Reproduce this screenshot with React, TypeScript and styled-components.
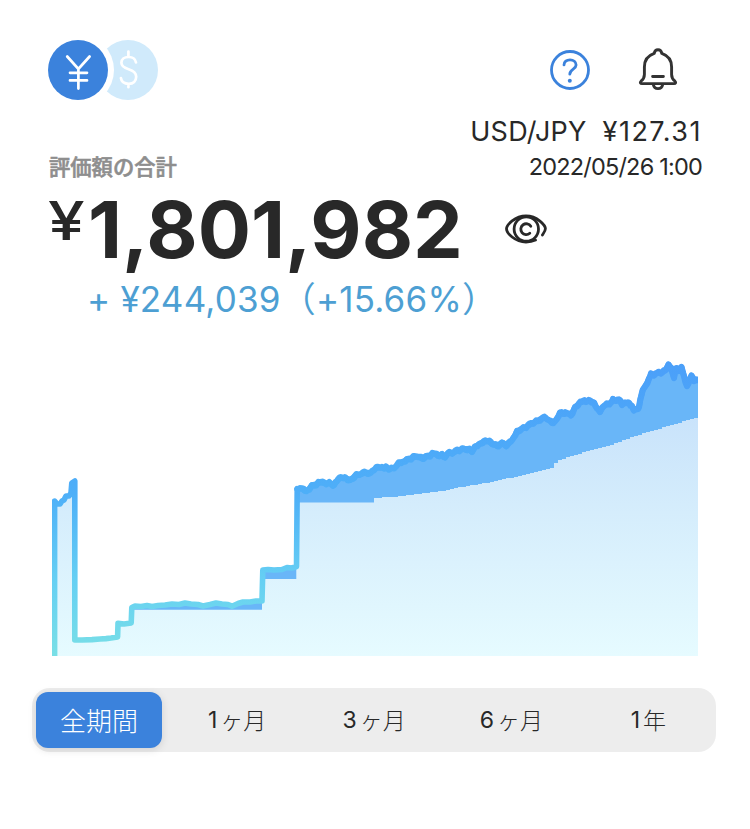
import { useState } from 'react';
import styled, { createGlobalStyle } from 'styled-components';

const colors = {
  primary: '#3b82dc',
  primaryLight: '#d0eafb',
  text: '#282828',
  muted: '#8e8e8e',
  gain: '#4d9fd3',
  tabs: '#ededed',
};

const GlobalStyle = createGlobalStyle`
  * {
    box-sizing: border-box;
  }

  body {
    margin: 0;
    background-color: #fff;
    color: ${colors.text};
    font-family: Inter, 'Noto Sans CJK JP', sans-serif;
  }
`;

const Container = styled.div`
  width: 750px;
  height: 829px;
  padding: 40px 34px 0 32px;
  overflow: hidden;
`;

const Header = styled.header`
  height: 60px;
  padding: 0 37px 0 16px;
  display: flex;
  align-items: center;
  justify-content: space-between;
`;

const Actions = styled.div`
  display: flex;
  align-items: center;
  gap: 48px;
`;

const IconButton = styled.button`
  padding: 0;
  border: none;
  background-color: transparent;
  display: flex;
  cursor: pointer;
`;

const Rate = styled.div`
  height: 36px;
  margin-top: 14px;
  padding-right: 14px;
  display: flex;
  justify-content: flex-end;
  gap: 16px;
  font-size: 27px;
  line-height: 36px;
  letter-spacing: 0.2px;
`;

const Price = styled.span`
  letter-spacing: 1.5px;
`;

const LabelRow = styled.div`
  height: 36px;
  padding: 0 14px 0 17px;
  display: flex;
  justify-content: space-between;
  line-height: 34px;
`;

const Label = styled.div`
  color: ${colors.muted};
  font-size: 21.3px;
  font-weight: 500;
  -webkit-text-stroke: 0.6px ${colors.muted};
`;

const Updated = styled.div`
  font-size: 23.5px;
  letter-spacing: -0.8px;
`;

const TotalRow = styled.div`
  height: 86px;
  padding-left: 16px;
  display: flex;
  align-items: center;
`;

const Total = styled.div`
  width: 456px;
  display: flex;
  align-items: flex-start;
`;

const Currency = styled.span`
  width: 40px;
  padding-top: 1px;
  font-size: 54px;
  font-weight: 500;
  line-height: 66px;
  transform: scaleX(1.22);
  transform-origin: left;
`;

const Amount = styled.span`
  font-size: 79px;
  font-weight: 700;
  line-height: 84px;
`;

const Gain = styled.div`
  height: 56px;
  padding-left: 55px;
  color: ${colors.gain};
  font-size: 35px;
  line-height: 54px;
  letter-spacing: 0.2px;
  white-space: pre;
`;

const ChartArea = styled.div`
  height: 308px;
  margin-top: 28px;
  padding-left: 20px;

  svg {
    display: block;
  }
`;

const Tabs = styled.nav`
  width: 684px;
  height: 64px;
  margin-top: 24px;
  padding: 4px 0 4px 4px;
  border-radius: 18px;
  background-color: ${colors.tabs};
  display: grid;
  grid-template-columns: 131.5px repeat(4, 1fr);
`;

interface TabProps {
  $active: boolean;
}

const Tab = styled.button<TabProps>`
  padding: 0 0 2px;
  border: none;
  border-radius: 12px;
  background-color: ${(props) =>
    props.$active ? colors.primary : 'transparent'};
  box-shadow: ${(props) =>
    props.$active ? '0 2px 8px rgba(0, 0, 0, 0.12)' : 'none'};
  color: ${(props) => (props.$active ? '#fff' : colors.text)};
  font-family: inherit;
  font-size: ${(props) => (props.$active ? '26px' : '23px')};
  font-weight: 300;
  display: flex;
  align-items: center;
  justify-content: center;
  cursor: pointer;

  &:first-child {
    margin-right: 5.5px;
  }
`;

const Count = styled.span`
  margin: 2px 3px 0 2px;
  font-weight: 400;
`;

const Unit = styled.span`
  font-size: 23px;
`;

const CurrencyLogo = () => (
  <svg width="110" height="60" viewBox="48 40 110 60" fill="none">
    <circle cx="128" cy="70" r="30" fill={colors.primaryLight} />
    <circle cx="78" cy="70" r="36" fill="#fff" />
    <circle cx="78" cy="70" r="30" fill={colors.primary} />
    <g stroke="#fff" strokeWidth="2.7" strokeLinecap="round">
      <path d="M67.2 56.5 78.4 69 89.6 56.5M78.4 69V88.6M70 72.8H87M70 80.4H87" />
      <path d="M128.4 51.5V57M128.4 84V87.2M136 62.5C135.4 59 132.6 57 128.6 57C124.2 57 121.4 59.3 121.4 62.8C121.4 66.4 124 67.8 128.6 69.2C133.6 70.7 136.2 72.8 136.2 76.8C136.2 81.2 133.2 83.8 128.8 83.8C124.2 83.8 121.4 81.6 120.9 78" />
    </g>
  </svg>
);

const HelpIcon = () => (
  <svg width="40" height="40" viewBox="550 50 40 40" fill="none">
    <g stroke={colors.primary} strokeWidth="2.8" strokeLinecap="round">
      <circle cx="570" cy="70" r="18.5" />
      <path d="M564 64.9C564 61.8 566.6 59.8 570 59.8C573.5 59.8 576.1 62 576.1 65C576.1 69.2 569.8 69 569.8 74.2" />
    </g>
    <circle cx="569.8" cy="80.7" r="2" fill={colors.primary} />
  </svg>
);

const BellIcon = () => (
  <svg width="41" height="46" viewBox="638 47 41 46" fill="none">
    <g
      stroke="#333"
      strokeWidth="2.9"
      strokeLinecap="round"
      strokeLinejoin="round"
    >
      <path d="M654.2 53.4C654.6 51 655.8 49.7 658 49.7C660.2 49.7 661.4 51 661.8 53.4C668 55.5 671.6 60.3 671.6 67V74.5C671.6 78.5 673 79.6 675 81.2C676.3 82.4 675.6 83.6 674 83.6H642C640.4 83.6 639.7 82.4 641 81.2C643 79.6 644.4 78.5 644.4 74.5V67C644.4 60.3 648 55.5 654.2 53.4Z" />
      <path d="M653.3 84.5C653.8 87.2 655.4 88.6 658 88.6C660.6 88.6 662.2 87.2 662.7 84.5M652.6 76.5H663.4" />
    </g>
  </svg>
);

const EyeIcon = () => (
  <svg width="44" height="32" viewBox="504 213 44 32" fill="none">
    <g stroke={colors.text} strokeWidth="2.8" strokeLinecap="round">
      <path d="M542.4 235C543.4 233.5 545.4 231 545.4 228.8C545.4 225.5 537.4 216 526 216C515 216 506.5 225 506.5 228.8C506.5 233 515 242 526 242C529.6 242 532.6 241.4 535.5 240" />
      <circle cx="526.3" cy="229" r="12.2" />
      <path d="M530.8 226.3A5.4 5.4 0 1 0 529.8 233.2" />
    </g>
  </svg>
);

type Point = [number, number];

const valuation: Point[] = [
  [54.6, 660], [54.6, 501], [57, 504], [60, 504], [62, 501], [64, 500],
  [66, 496], [69, 496], [71, 493], [71.8, 483], [74.8, 481], [74.8, 640],
  [82, 640], [92, 639.6], [100, 639], [106, 638.6], [111, 638], [117.6, 637],
  [118, 623.3], [124, 624], [131.2, 623], [131.8, 607.5], [135, 606],
  [141, 606.5], [147, 605.5], [152, 606.5], [158, 605.5], [165, 605],
  [172, 604], [179, 604.5], [185, 603], [191, 604], [198, 604.5],
  [203, 606], [210, 604.5], [216, 603], [222, 604], [228, 604.5],
  [232, 606.2], [238, 603.5], [243, 602], [250, 602], [256, 601],
  [262, 601], [262.8, 570], [268, 569.5], [274, 570], [282, 569.5],
  [287, 567.5], [292, 568], [296.5, 566.5], [297.2, 489], [301, 488.5],
  [305, 491], [308, 490], [312, 485], [317, 484], [320, 482.5],
  [325, 483.5], [330, 483], [334, 485], [338, 479.5], [342, 478],
  [346, 478], [350, 480], [355, 476], [360, 474.5], [366, 472.5],
  [371, 472.5], [375, 469], [379, 467.5], [383, 468], [386, 466.5],
  [390, 469], [396, 466.5], [400, 462.5], [404, 461.5], [407, 459],
  [412, 458], [417, 456.5], [422, 458.5], [426, 456], [431, 455],
  [434, 453.5], [438, 456], [442, 454], [445, 457.5], [448, 453],
  [453, 453], [458, 450.5], [463, 448.5], [468, 449], [472, 452],
  [476, 446], [480, 443.5], [484, 441], [488, 441], [492, 444],
  [497, 446], [502, 442.5], [507, 445.5], [511, 441.5], [514, 437],
  [517, 431], [522, 428.5], [527, 426.5], [532, 423.5], [537, 421],
  [543, 417.5], [548, 419.5], [552, 423], [556, 420], [560, 412.5],
  [564, 414], [567, 413], [571, 415.5], [575, 407], [579, 403.5],
  [583, 401], [586, 402], [590, 400.5], [594, 402.5], [597, 408.5],
  [600, 412], [604, 406], [608, 404], [611, 402.5], [613, 399],
  [616, 401], [619, 399.5], [622, 405], [625, 402.5], [629, 403],
  [632, 406], [634, 410.5], [639, 407], [641, 397], [643, 389.5],
  [646, 385], [649, 378.5], [651, 373.5], [654, 375.5], [657, 373],
  [661, 373.5], [665, 370.5], [668.5, 364.5], [671, 367.5],
  [674, 378], [675.5, 368.5], [679, 371], [681.5, 367], [684, 376],
  [687, 386], [690, 379], [691.5, 375.5], [694, 381], [700, 379.5],
];

const principal: Point[] = [
  [374, 498], [397, 496.5], [417, 494], [443, 490.5], [460, 487],
  [487, 482.5], [513, 477], [530, 473], [547, 468.5], [552, 467.5],
  [555, 461], [580, 453], [607, 446], [630, 437], [653, 430],
  [673, 424], [698, 417],
];

const toPath = (points: Point[]) =>
  'M' + points.map(([x, y]) => `${x} ${y}`).join('L');

const withSwings = (points: Point[], from: number) => {
  const result: Point[] = [];
  points.forEach(([x, y], i) => {
    result.push([x, y]);
    const next = points[i + 1];
    if (x < from || !next) return;
    for (let px = x + 1.4; px < next[0] - 0.5; px += 1.4) {
      const py = y + ((next[1] - y) * (px - x)) / (next[0] - x);
      result.push([px, py + Math.sin(px * 12.9) * 1.4]);
    }
  });
  return result;
};

const toSteps = (points: Point[], step = 4) => {
  let d = '';
  for (let x = points[0][0]; x < 698; x += step) {
    const i = points.findIndex(([px]) => px > x);
    const [x0, y0] = points[i - 1];
    const [x1, y1] = points[i];
    const y = Math.round(y0 + ((y1 - y0) * (x - x0)) / (x1 - x0));
    d += `V${y}H${Math.min(x + step, 698)}`;
  }
  return d;
};

const BOTTOM = 656;

const Chart = () => {
  const early = valuation.filter(([x]) => x <= 131.5);
  const late = valuation.filter(([x]) => x > 131.5);
  const growth = valuation.filter(([x]) => x > 297);

  return (
    <svg width="646" height="308" viewBox="52 356 646 308">
      <defs>
        <linearGradient
          id="line"
          gradientUnits="userSpaceOnUse"
          x1="0"
          y1="360"
          x2="0"
          y2="656"
        >
          <stop offset="0" stopColor="#4b9ff9" />
          <stop offset="0.45" stopColor="#4eaff8" />
          <stop offset="0.75" stopColor="#66d0f3" />
          <stop offset="1" stopColor="#79dfe6" />
        </linearGradient>
        <linearGradient
          id="area"
          gradientUnits="userSpaceOnUse"
          x1="0"
          y1="417"
          x2="0"
          y2="656"
        >
          <stop offset="0" stopColor="#c9e3fb" />
          <stop offset="0.4" stopColor="#d5edfc" />
          <stop offset="1" stopColor="#e6fbff" />
        </linearGradient>
        <clipPath id="plot">
          <rect x="52" y="356" width="646" height="300" />
        </clipPath>
      </defs>
      <g clipPath="url(#plot)">
        <path d={`${toPath(early)}V${BOTTOM}H54Z`} fill="url(#area)" />
        <path d={`${toPath(late)}V${BOTTOM}H131.8Z`} fill="#69b6f8" />
        <path
          d={`M131 ${BOTTOM}V609.7H262V579H296.3V502.6H374${toSteps(
            principal
          )}V${BOTTOM}Z`}
          fill="url(#area)"
        />
        <g
          fill="none"
          stroke="url(#line)"
          strokeLinejoin="round"
          strokeLinecap="round"
        >
          <path d={toPath(valuation)} strokeWidth="5.6" />
          <path d={toPath(withSwings(growth, 297))} strokeWidth="6.2" />
        </g>
      </g>
    </svg>
  );
};

const periods = [
  { count: '', unit: '全期間' },
  { count: '1', unit: 'ヶ月' },
  { count: '3', unit: 'ヶ月' },
  { count: '6', unit: 'ヶ月' },
  { count: '1', unit: '年' },
];

const PeriodTabs = () => {
  const [selected, setSelected] = useState(0);

  return (
    <Tabs>
      {periods.map(({ count, unit }, index) => (
        <Tab
          key={count + unit}
          $active={index === selected}
          onClick={() => setSelected(index)}
        >
          {count ? (
            <>
              <Count>{count}</Count>
              <Unit>{unit}</Unit>
            </>
          ) : (
            unit
          )}
        </Tab>
      ))}
    </Tabs>
  );
};

const App = () => {
  return (
    <Container>
      <GlobalStyle />
      <Header>
        <CurrencyLogo />
        <Actions>
          <IconButton aria-label="help">
            <HelpIcon />
          </IconButton>
          <IconButton aria-label="notifications">
            <BellIcon />
          </IconButton>
        </Actions>
      </Header>
      <Rate>
        <span>USD/JPY</span>
        <Price>¥127.31</Price>
      </Rate>
      <LabelRow>
        <Label>評価額の合計</Label>
        <Updated>2022/05/26 1:00</Updated>
      </LabelRow>
      <TotalRow>
        <Total>
          <Currency>¥</Currency>
          <Amount>1,801,982</Amount>
        </Total>
        <IconButton aria-label="toggle amount">
          <EyeIcon />
        </IconButton>
      </TotalRow>
      <Gain>+ ¥244,039（+15.66%）</Gain>
      <ChartArea>
        <Chart />
      </ChartArea>
      <PeriodTabs />
    </Container>
  );
};

export default App;
